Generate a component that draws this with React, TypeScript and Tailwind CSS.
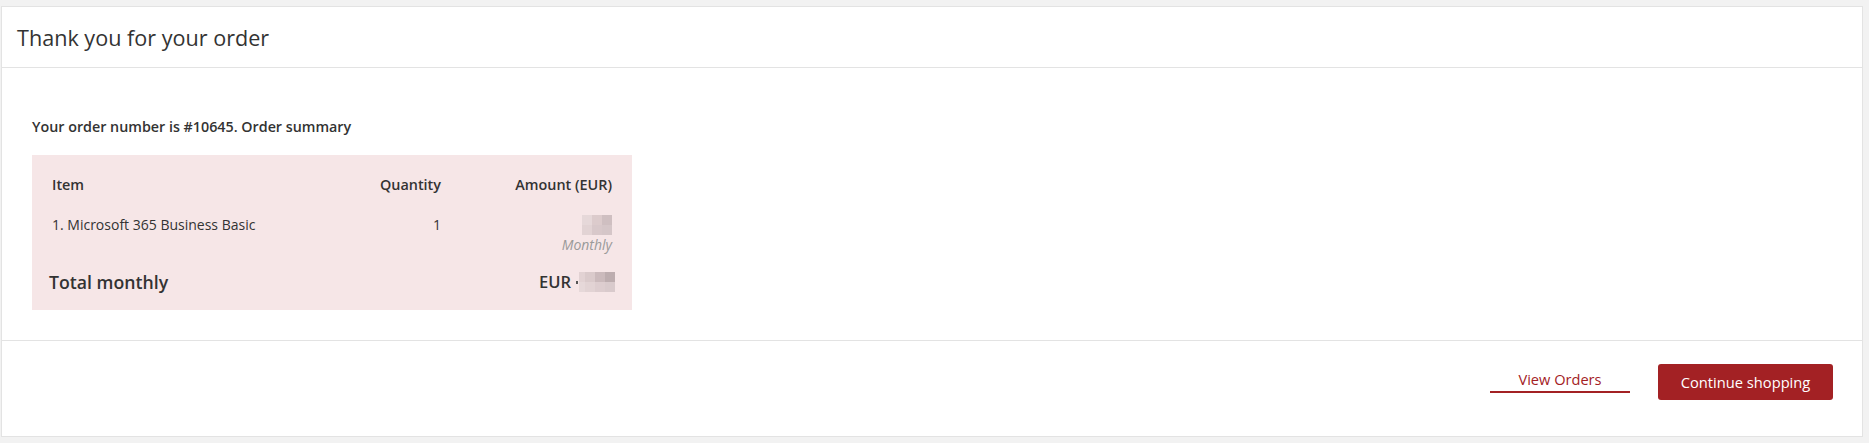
const font = { fontFamily: '"Open Sans", "Liberation Sans", sans-serif' };

function Blur({ cells, cols }: { cells: string[]; cols: string }) {
  return (
    <span className={`inline-grid ${cols}`}>
      {cells.map((c, i) => (
        <span key={i} className="block h-[10px]" style={{ backgroundColor: c }} />
      ))}
    </span>
  );
}

export default function App() {
  return (
    <div className="min-h-screen bg-[#f2f2f2] pt-[6px] pb-[7px] pl-px pr-[6px]" style={font}>
      <div className="border border-[#e3e3e3] bg-white">
        {/* header */}
        <div className="flex h-[61px] items-center border-b border-[#e3e3e3] px-[15px] pt-[2px]">
          <h1 className="text-[21.6px] font-normal text-[#333]">Thank you for your order</h1>
        </div>

        {/* body */}
        <div className="pt-[49px] pb-[30px] pl-[30px]">
          <p className="text-[14.3px] leading-[20px] font-semibold text-[#333]">
            Your order number is #10645. Order summary
          </p>
          <div className="mt-[18px] w-[600px] bg-[#f6e6e7] pt-[20px] pb-[16px] text-[14px] text-[#333]">
            <div className="grid grid-cols-[1fr_100px_171px] px-[20px] text-[14.4px] leading-[20px] font-semibold">
              <span>Item</span>
              <span className="text-right">Quantity</span>
              <span className="text-right">Amount (EUR)</span>
            </div>
            <div className="mt-[20px] grid grid-cols-[1fr_100px_171px] px-[20px] leading-[20px]">
              <span>1. Microsoft 365 Business Basic</span>
              <span className="text-right">1</span>
              <span className="flex flex-col items-end">
                <span className="flex h-[20px] items-center">
                  <Blur
                    cols="grid-cols-[10px_10px_10px]"
                    cells={["#e6d8d9", "#dccbcc", "#cfbfc1", "#e2d3d4", "#d8c8ca", "#d5c6c8"]}
                  />
                </span>
                <span className="italic text-[#9a9a9a]">Monthly</span>
              </span>
            </div>
            <div className="mt-[15px] flex items-center justify-between px-[17px] leading-[24px]">
              <span className="text-[17.7px] font-semibold">Total monthly</span>
              <span className="flex items-center text-[16.5px] font-semibold">
                EUR
                <span className="ml-[5px] mr-px h-[3px] w-[2px] self-center bg-[#555]" />
                <Blur
                  cols="grid-cols-[6px_10px_10px_10px]"
                  cells={["#e2d2d3", "#dacacb", "#cbbabc", "#bdadaf", "#e6d8d9", "#e2d3d4", "#ddcdcf", "#d9cacc"]}
                />
              </span>
            </div>
          </div>
        </div>

        {/* footer */}
        <div className="flex h-[96px] items-start justify-end gap-[28px] border-t border-[#e3e3e3] pt-[23px] pr-[29px]">
          <a className="mt-[5px] block w-[140px] border-b-2 border-[#a32124] pb-[2px] text-center text-[14.6px] leading-[20px] text-[#a32124]">
            View Orders
          </a>
          <button className="h-[36px] w-[175px] rounded-[3px] bg-[#a32124] text-[14.7px] text-white">
            Continue shopping
          </button>
        </div>
      </div>
    </div>
  );
}
